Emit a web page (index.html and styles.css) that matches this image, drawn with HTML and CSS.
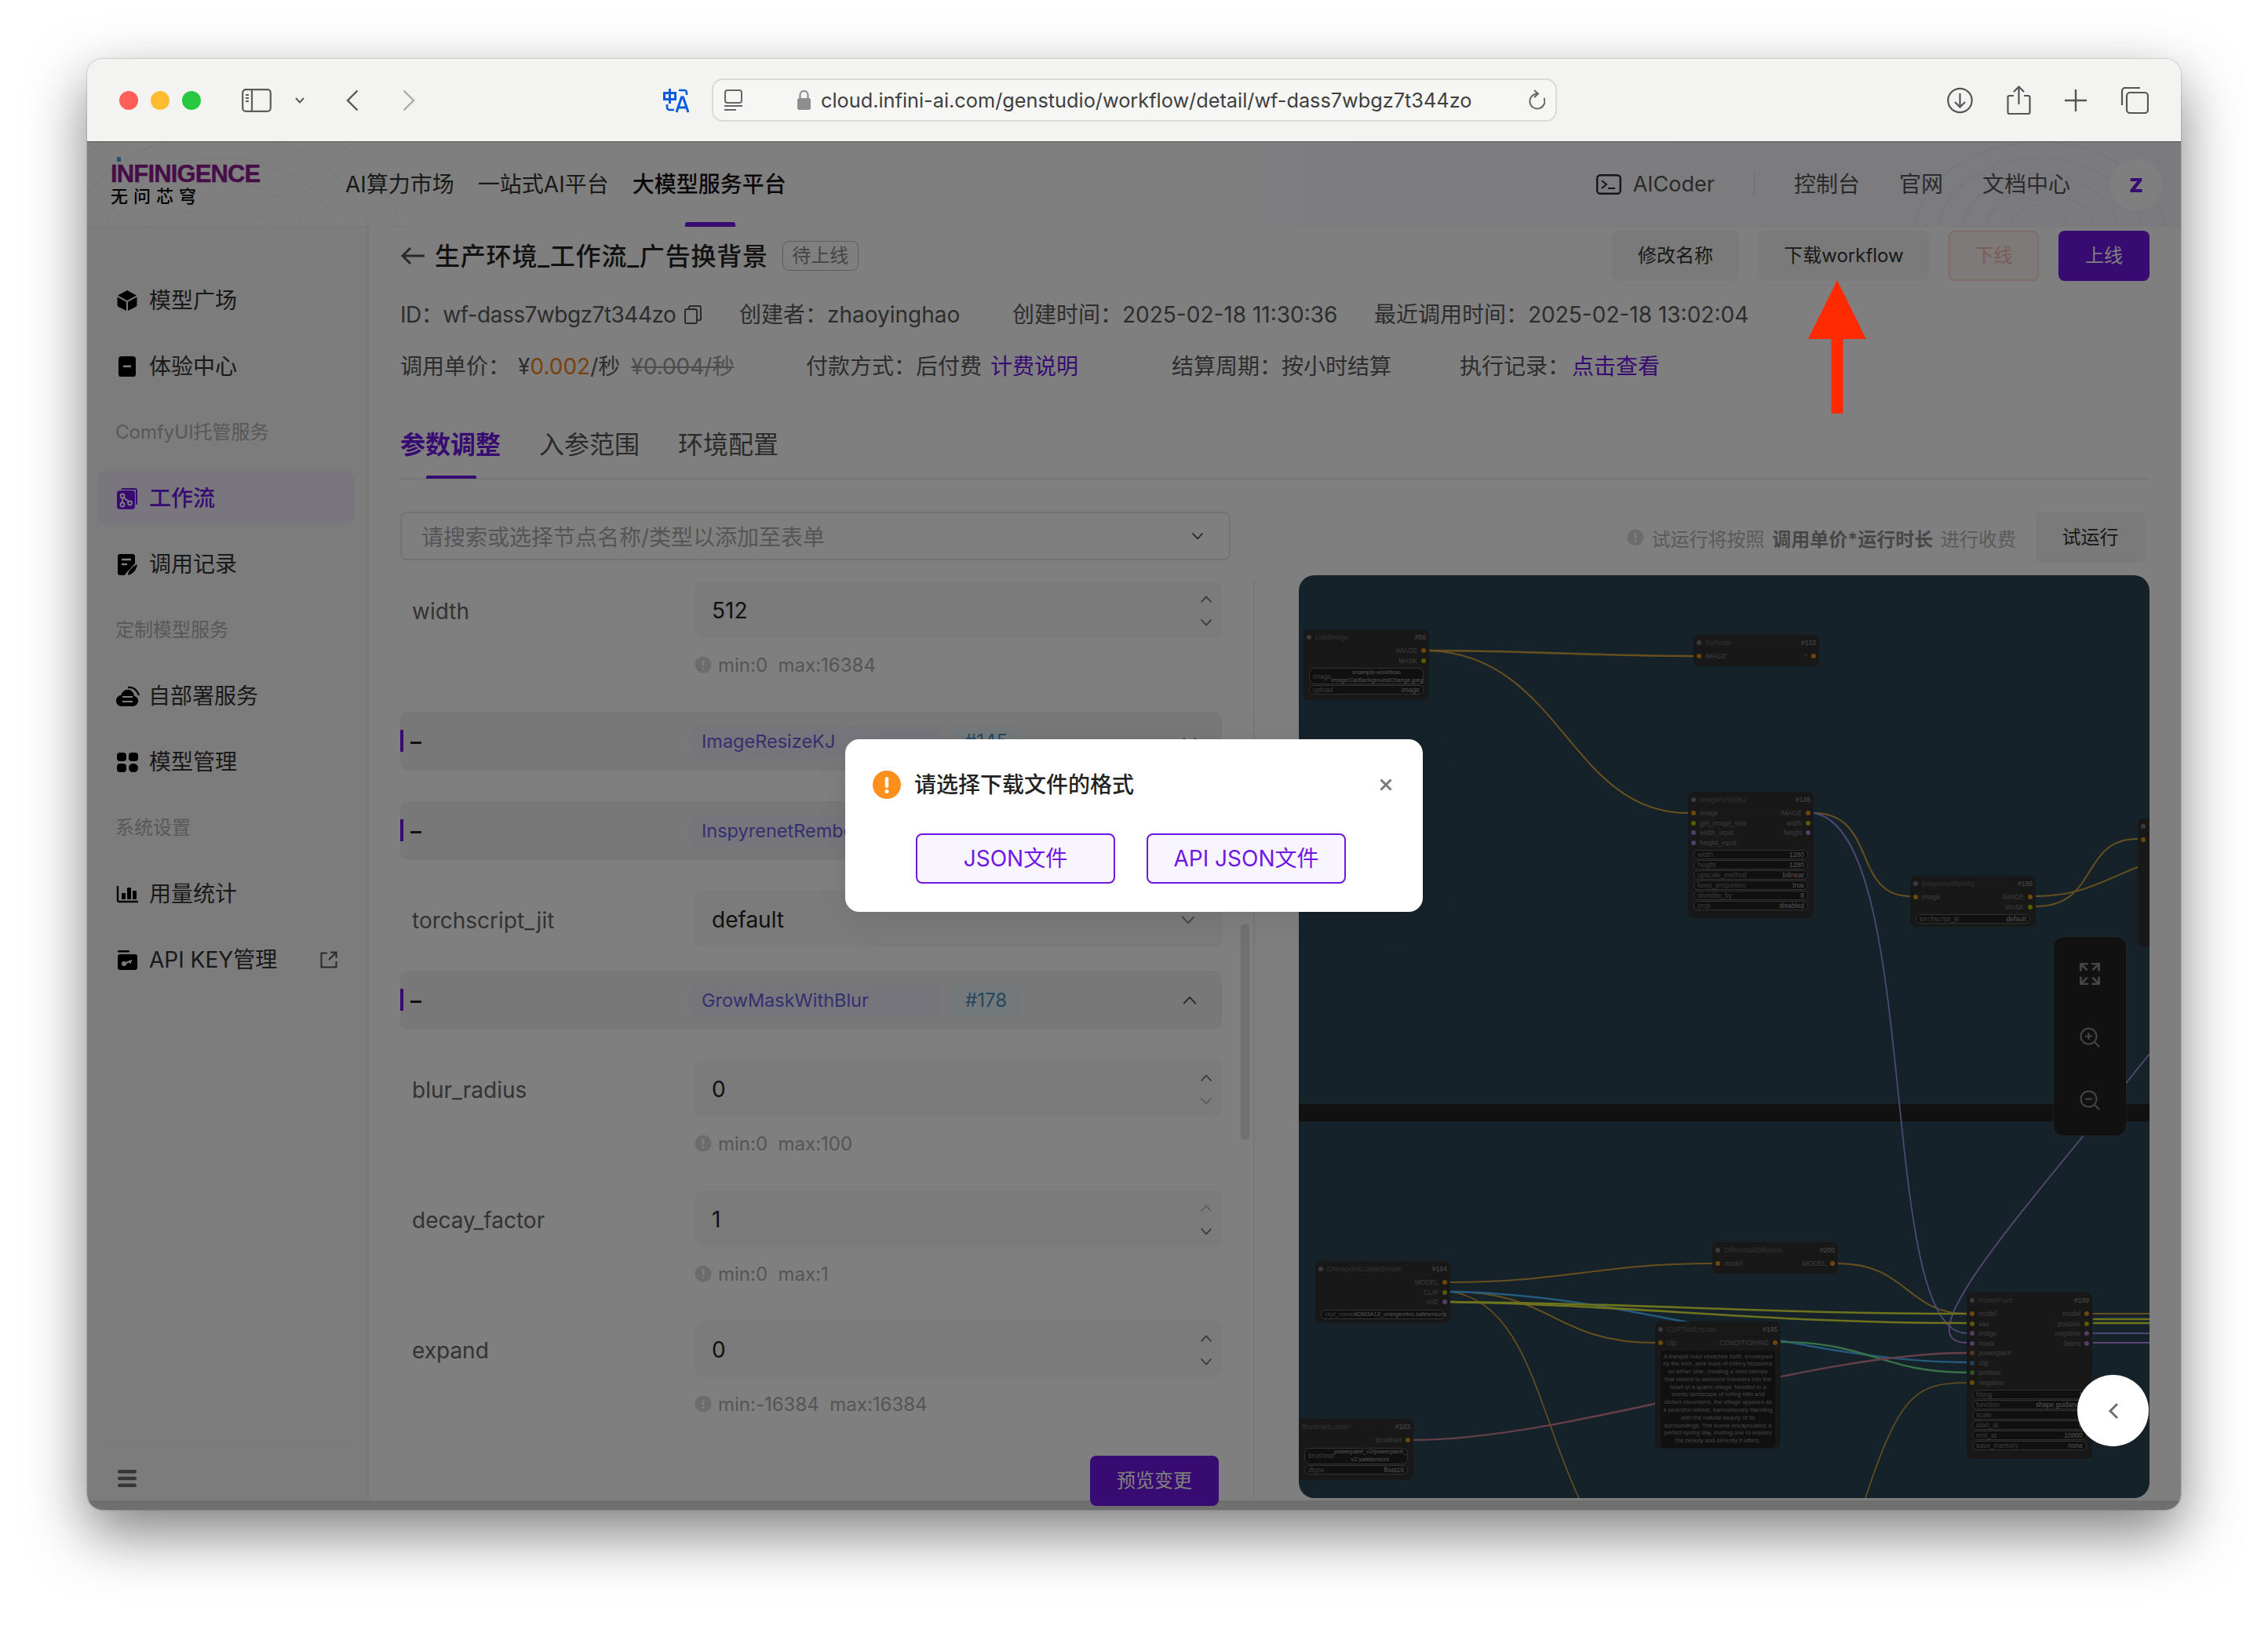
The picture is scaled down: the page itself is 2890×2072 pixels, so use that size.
FILE: index.html
```html
<!DOCTYPE html>
<html lang="zh-CN">
<head>
<meta charset="utf-8">
<title>生产环境_工作流_广告换背景</title>
<link rel="stylesheet" href="styles.css">
</head>
<body>
<svg class="defs" width="0" height="0">
  <symbol id="chev-up" viewBox="0 0 16 10"><path d="M1.5 8.5 8 1.5l6.5 7" fill="none" stroke="currentColor" stroke-width="1.6"/></symbol>
  <symbol id="chev-down" viewBox="0 0 16 10"><path d="M1.5 1.5 8 8.5l6.5-7" fill="none" stroke="currentColor" stroke-width="1.6"/></symbol>
  <symbol id="tip" viewBox="0 0 24 24"><circle cx="12" cy="12" r="11.5" fill="currentColor"/><rect x="10.5" y="5.5" width="3" height="8.5" rx="1.4" fill="#fff"/><circle cx="12" cy="17.3" r="1.7" fill="#fff"/></symbol>
</svg>
<div class="window">
  <div class="toolbar">
    <div class="lights"><i class="light red"></i><i class="light yellow"></i><i class="light green"></i></div>
    <svg class="tb-sidebar" width="38" height="30" viewBox="0 0 38 30"><rect x="1.2" y="1.2" width="35.6" height="27.6" rx="4" fill="none" stroke="#5c5c5c" stroke-width="2.2"/><path d="M13 1v28" stroke="#5c5c5c" stroke-width="2.2"/><path d="M5 8h4M5 12h4M5 16h4" stroke="#5c5c5c" stroke-width="2"/></svg>
    <svg class="tb-menu" width="12" height="8" viewBox="0 0 12 8"><path d="M1 1l5 5.5L11 1" fill="none" stroke="#5c5c5c" stroke-width="2"/></svg>
    <svg class="tb-back" width="16" height="28" viewBox="0 0 16 28"><path d="M14.5 1.5 2 14l12.5 12.5" fill="none" stroke="#555" stroke-width="2.4"/></svg>
    <svg class="tb-fwd" width="16" height="28" viewBox="0 0 16 28"><path d="M1.5 1.5 14 14 1.5 26.5" fill="none" stroke="#aaa" stroke-width="2.4"/></svg>
    <svg class="tb-trans" width="33" height="32" viewBox="0 0 33 32"><path d="M1.5 6.5h14v8h-14zM8.5 1v19" fill="none" stroke="#0a5cdf" stroke-width="3"/><path d="M20 3h7a3 3 0 0 1 3 3v3M5 21v4a3 3 0 0 0 3 3h6" fill="none" stroke="#0a5cdf" stroke-width="2.6"/><path d="M17 31 23.5 12h2L32 31M19.5 25h10" fill="none" stroke="#0a5cdf" stroke-width="3"/></svg>
    <div class="urlbar">
      <svg class="url-reader" width="23" height="27" viewBox="0 0 23 27"><rect x="1" y="1" width="21" height="16" rx="3" fill="none" stroke="#666" stroke-width="2"/><path d="M0 21h23M0 26h15" stroke="#666" stroke-width="2"/></svg>
      <svg class="url-lock" width="17" height="25" viewBox="0 0 17 25"><rect x="0" y="10" width="17" height="15" rx="2.5" fill="#8e8e8e"/><path d="M3.5 11V6a5 5 0 0 1 10 0v5" fill="none" stroke="#8e8e8e" stroke-width="2.2"/></svg>
      <span class="url-text">cloud.infini-ai.com/genstudio/workflow/detail/wf-dass7wbgz7t344zo</span>
      <svg class="url-reload" width="22" height="28" viewBox="0 0 22 28"><path d="M12 5.5a9.5 9.5 0 1 0 8.5 5.5" fill="none" stroke="#666" stroke-width="2"/><path d="M8 1l5 4.5-5 4.5" fill="none" stroke="#666" stroke-width="2"/></svg>
    </div>
    <svg class="tb-dl" width="33" height="34" viewBox="0 0 33 34"><circle cx="16.5" cy="17" r="15.2" fill="none" stroke="#555" stroke-width="2.2"/><path d="M16.5 8v17M10 19l6.5 6.5L23 19" fill="none" stroke="#555" stroke-width="2.2"/></svg>
    <svg class="tb-share" width="31" height="38" viewBox="0 0 31 38"><path d="M9 13H3.500a2 2 0 0 0-2 2v19a2 2 0 0 0 2 2h24a2 2 0 0 0 2-2V15a2 2 0 0 0-2-2H22" fill="none" stroke="#555" stroke-width="2.2"/><path d="M15.500 24V2M9 8l6.500-6.500L22 8" fill="none" stroke="#555" stroke-width="2.2"/></svg>
    <svg class="tb-plus" width="28" height="28" viewBox="0 0 28 28"><path d="M14 0v28M0 14h28" stroke="#555" stroke-width="2.4"/></svg>
    <svg class="tb-tabs" width="36" height="34" viewBox="0 0 36 34"><rect x="8" y="7" width="27" height="26" rx="4" fill="none" stroke="#555" stroke-width="2.2"/><path d="M2 23V5a4 4 0 0 1 4-4h19" fill="none" stroke="#555" stroke-width="2.2"/></svg>
  </div>

  <div class="stage">
    <div class="app">
      <header class="topbar">
        <svg class="ripple ripple-left" width="420" height="108" viewBox="0 0 420 108"><g fill="none" stroke="#000" stroke-opacity=".035" stroke-width="2"><ellipse cx="170" cy="130" rx="70" ry="50"/><ellipse cx="170" cy="130" rx="110" ry="80"/><ellipse cx="170" cy="130" rx="150" ry="110"/><ellipse cx="170" cy="130" rx="190" ry="140"/><ellipse cx="170" cy="130" rx="230" ry="170"/></g></svg>
        <svg class="ripple ripple-right" width="340" height="108" viewBox="0 0 340 108"><g fill="none" stroke="#000" stroke-opacity=".03" stroke-width="2"><ellipse cx="160" cy="120" rx="40" ry="40"/><ellipse cx="160" cy="120" rx="70" ry="60"/><ellipse cx="160" cy="120" rx="100" ry="80"/><ellipse cx="160" cy="120" rx="130" ry="100"/><ellipse cx="160" cy="120" rx="160" ry="120"/></g></svg>
        <div class="logo">
          <div class="logo-en"><span class="logo-one">I</span>NFINIGENCE</div>
          <div class="logo-zh">无问芯穹</div>
        </div>
        <nav class="topnav">
          <a class="topnav-item">AI算力市场</a>
          <a class="topnav-item">一站式AI平台</a>
          <a class="topnav-item active">大模型服务平台</a>
        </nav>
        <div class="top-right">
          <svg class="ai-icon" width="32" height="26" viewBox="0 0 32 26"><rect x="1.200" y="1.200" width="29.600" height="23.600" rx="4" fill="none" stroke="#2d2d2d" stroke-width="2.400"/><path d="M7 8l6 5-6 5M15 18h9" fill="none" stroke="#2d2d2d" stroke-width="2"/></svg>
          <span class="ai-text">AICoder</span>
          <i class="top-sep"></i>
          <a class="top-link">控制台</a>
          <a class="top-link">官网</a>
          <a class="top-link">文档中心</a>
          <div class="avatar">z</div>
        </div>
      </header>

      <div class="body">
        <aside class="sidebar">
          <div class="side-list">
            <a class="side-item"><svg width="28" height="28" viewBox="0 0 28 28"><path d="M14 1 26 7.500 14 14 2 7.500z"/><path d="M1.500 9.500 13 15.800V27L3 22a3 3 0 0 1-1.500-2.500zM26.500 9.500 15 15.800V27l10-5a3 3 0 0 0 1.500-2.500z"/></svg><span>模型广场</span></a>
            <a class="side-item"><svg width="28" height="28" viewBox="0 0 28 28"><path d="M7 1h14a4 4 0 0 1 4 4v19a3 3 0 0 1-3 3H6a3 3 0 0 1-3-3V5a4 4 0 0 1 4-4z"/><rect x="9" y="12.500" width="10" height="2.600" fill="#fff"/></svg><span>体验中心</span></a>
            <div class="side-label">ComfyUI托管服务</div>
            <a class="side-item active"><svg width="28" height="28" viewBox="0 0 28 28"><path d="M7 1h17a3 3 0 0 1 3 3v18h-2V3H7z"/><rect x="1" y="4" width="23" height="24" rx="4"/><g fill="none" stroke="#fff" stroke-width="1.800"><circle cx="8" cy="11" r="2.500"/><circle cx="8" cy="22" r="2.500"/><circle cx="17.500" cy="20" r="2.500"/><path d="M8 13.500v6M9.500 13l6 5"/></g></svg><span>工作流</span></a>
            <a class="side-item"><svg width="28" height="28" viewBox="0 0 28 28"><path d="M5 1h16a3 3 0 0 1 3 3v9L12 26l-1 2H5a3 3 0 0 1-3-3V4a3 3 0 0 1 3-3z"/><path d="M7 8h12M7 14h7" stroke="#fff" stroke-width="2.400"/><path d="M15 28c0-6 6-11 12-14-1 7-5 12-12 14z"/></svg><span>调用记录</span></a>
            <div class="side-label">定制模型服务</div>
            <a class="side-item wide"><svg width="32" height="28" viewBox="0 0 32 28"><path d="M17 3c6-1 12 3 14 10" fill="none" stroke="#111" stroke-width="2.400"/><path d="M2 20c0-4 3-7 6-7 2-5 6-8 10-7 4 .5 7 4 7 8 3 .5 5 3 5 6 0 4-3 7-7 7H9c-4 0-7-3-7-7z"/><path d="M10 15h13M10 21h13" stroke="#fff" stroke-width="2"/></svg><span>自部署服务</span></a>
            <a class="side-item"><svg width="28" height="28" viewBox="0 0 28 28"><rect x="1" y="2" width="12" height="11" rx="4"/><rect x="16" y="2" width="12" height="11" rx="4"/><rect x="1" y="16" width="12" height="11" rx="4"/><rect x="16" y="16" width="12" height="11" rx="5.500"/></svg><span>模型管理</span></a>
            <div class="side-label">系统设置</div>
            <a class="side-item"><svg width="28" height="28" viewBox="0 0 28 28"><path d="M2 4v18a2 2 0 0 0 2 2h24" fill="none" stroke="#111" stroke-width="2.400"/><rect x="7" y="13" width="5" height="8" rx="1"/><rect x="14" y="6" width="5" height="15" rx="1"/><rect x="21" y="10" width="5" height="11" rx="1"/></svg><span>用量统计</span></a>
            <a class="side-item"><svg width="28" height="28" viewBox="0 0 28 28"><rect x="2" y="2" width="15" height="2.500" rx="1"/><path d="M5 7h19a3 3 0 0 1 3 3v14a3 3 0 0 1-3 3H5a3 3 0 0 1-3-3V10a3 3 0 0 1 3-3z"/><circle cx="10" cy="19" r="3" fill="#fff"/><path d="M10 19l10-4M18 15.800v3" stroke="#fff" stroke-width="2"/></svg><span>API KEY管理</span><svg class="side-ext" width="22" height="22" viewBox="0 0 22 22"><path d="M9 2.500H1.500v18h19V13M13 1.500h7.500V9M20 2l-9 9" fill="none" stroke="#545454" stroke-width="2"/></svg></a>
          </div>
          <div class="side-foot"><svg width="24" height="22" viewBox="0 0 24 22"><rect y="0" width="24" height="4.500" rx="2.200"/><rect y="8.800" width="24" height="4.500" rx="2.200"/><rect y="17.500" width="24" height="4.500" rx="2.200"/></svg></div>
        </aside>

        <main class="main">
          <div class="title-row">
            <svg class="back" width="32" height="24" viewBox="0 0 32 24"><path d="M31 12H3M13 2 3 12l10 10" fill="none" stroke="#555" stroke-width="3"/></svg>
            <h1 class="title">生产环境_工作流_广告换背景</h1>
            <span class="status">待上线</span>
            <div class="title-actions">
              <button class="btn">修改名称</button>
              <button class="btn w-dl">下载workflow</button>
              <button class="btn danger">下线</button>
              <button class="btn primary">上线</button>
            </div>
          </div>

          <div class="info">
            <div class="info-row">
              <span class="c-id"><span class="id-text">ID：wf-dass7wbgz7t344zo</span><svg class="copy" width="22" height="24" viewBox="0 0 22 24"><rect x="1" y="5" width="15" height="18" rx="2" fill="none" stroke="#555" stroke-width="2"/><path d="M6 5V3a2 2 0 0 1 2-2h11a2 2 0 0 1 2 2v14a2 2 0 0 1-2 2h-3" fill="none" stroke="#555" stroke-width="2"/></svg></span>
              <span class="c-user">创建者：zhaoyinghao</span>
              <span class="c-time">创建时间：2025-02-18 11:30:36</span>
              <span>最近调用时间：2025-02-18 13:02:04</span>
            </div>
            <div class="info-row">
              <span class="c-price">调用单价：<span class="price">¥<b>0.002</b>/秒</span><s class="old">¥0.004/秒</s></span>
              <span class="c-pay">付款方式：后付费<a class="link">计费说明</a></span>
              <span class="c-cycle">结算周期：按小时结算</span>
              <span>执行记录：<a class="link tight">点击查看</a></span>
            </div>
          </div>

          <div class="tabs">
            <a class="tab active">参数调整</a>
            <a class="tab">入参范围</a>
            <a class="tab">环境配置</a>
          </div>

          <div class="split">
            <section class="left">
              <div class="select"><span>请搜索或选择节点名称/类型以添加至表单</span><svg width="16" height="10"><use href="#chev-down"/></svg></div>
              <div class="form">
                <div class="field">
                  <label>width</label>
                  <div class="input"><span>512</span><div class="spin"><svg width="16" height="10"><use href="#chev-up"/></svg><svg width="16" height="10"><use href="#chev-down"/></svg></div></div>
                  <div class="hint"><svg width="22" height="22"><use href="#tip"/></svg>min:0&nbsp; max:16384</div>
                </div>
                <div class="group"><i class="g-bar"></i><b class="g-dash"></b><span class="g-name">ImageResizeKJ</span><span class="g-id">#145</span><svg class="g-chev" width="20" height="12"><use href="#chev-down"/></svg></div>
                <div class="group"><i class="g-bar"></i><b class="g-dash"></b><span class="g-name">InspyrenetRembg</span><span class="g-id">#186</span><svg class="g-chev" width="20" height="12"><use href="#chev-down"/></svg></div>
                <div class="field nohint">
                  <label>torchscript_jit</label>
                  <div class="input"><span>default</span><svg class="sel-chev" width="20" height="12"><use href="#chev-down"/></svg></div>
                </div>
                <div class="group"><i class="g-bar"></i><b class="g-dash"></b><span class="g-name">GrowMaskWithBlur</span><span class="g-id">#178</span><svg class="g-chev" width="20" height="12"><use href="#chev-up"/></svg></div>
                <div class="field">
                  <label>blur_radius</label>
                  <div class="input"><span>0</span><div class="spin"><svg width="16" height="10"><use href="#chev-up"/></svg><svg class="faint" width="16" height="10"><use href="#chev-down"/></svg></div></div>
                  <div class="hint"><svg width="22" height="22"><use href="#tip"/></svg>min:0&nbsp; max:100</div>
                </div>
                <div class="field">
                  <label>decay_factor</label>
                  <div class="input"><span>1</span><div class="spin"><svg class="faint" width="16" height="10"><use href="#chev-up"/></svg><svg width="16" height="10"><use href="#chev-down"/></svg></div></div>
                  <div class="hint"><svg width="22" height="22"><use href="#tip"/></svg>min:0&nbsp; max:1</div>
                </div>
                <div class="field last">
                  <label>expand</label>
                  <div class="input"><span>0</span><div class="spin"><svg width="16" height="10"><use href="#chev-up"/></svg><svg width="16" height="10"><use href="#chev-down"/></svg></div></div>
                  <div class="hint"><svg width="22" height="22"><use href="#tip"/></svg>min:-16384&nbsp; max:16384</div>
                </div>
                <button class="btn preview">预览变更</button>
                <i class="scrollbar"></i>
              </div>
            </section>

            <section class="right">
              <div class="run-row">
                <svg width="22" height="22"><use href="#tip"/></svg>
                <span class="run-note">试运行将按照 <b>调用单价*运行时长</b> 进行收费</span>
                <button class="btn run">试运行</button>
              </div>
              <div class="canvas">
                <i class="band"></i>
                <svg class="wires" viewBox="1655 734 1084 1176" width="1084" height="1176">
                  <g fill="none" stroke-width="2">
                    <g stroke="#cfa03c">
                      <path d="M1821 830C1950 830 2030 837 2158 837" stroke-width="2.600"/>
                      <path d="M1821 830C1990 836 2000 1037 2151 1037"/>
                      <path d="M2311 1037C2392 1037 2360 1143 2434 1143"/>
                      <path d="M2594 1156C2675 1156 2650 1070 2724 1070"/>
                      <path d="M2594 1143C2655 1143 2680 1122 2739 1100"/>
                      <path d="M1848 1635C1990 1635 2040 1611 2182 1611"/>
                      <path d="M1848 1647C1980 1647 1980 1712 2109 1712"/>
                      <path d="M2342 1611C2430 1611 2430 1675 2506 1675"/>
                      <path d="M2667 1675H2739"/>
                      <path d="M1848 1647C1945 1660 1960 1800 2012 1910" stroke-width="1.600"/>
                      <path d="M2377 1910C2420 1780 2440 1763 2506 1763" stroke-width="1.600"/>
                    </g>
                    <g stroke="#9a90e8">
                      <path d="M2311 1037C2450 1060 2390 1700 2506 1700" stroke-width="1.800"/>
                      <path d="M2667 1700H2739"/>
                    </g>
                    <g stroke="#b090e0">
                      <path d="M2506 1712C2440 1712 2530 1600 2655 1448L2739 1344" stroke-width="1.800"/>
                      <path d="M2667 1712H2739"/>
                    </g>
                    <g stroke="#48b6ff" stroke-width="2.400">
                      <path d="M1848 1647C2080 1650 2300 1737 2506 1737"/>
                    </g>
                    <g stroke="#dce83a" stroke-width="2.600">
                      <path d="M1848 1660C2100 1665 2250 1687 2506 1687"/>
                      <path d="M1848 1660C2100 1662 2250 1675 2506 1675"/>
                      <path d="M2667 1682H2739"/>
                      <path d="M2667 1687H2739"/>
                    </g>
                    <path stroke="#70e090" stroke-width="2.400" d="M2269 1711C2380 1711 2400 1750 2506 1750"/>
                    <path stroke="#c87e90" stroke-width="2.400" d="M1801 1836C2000 1836 2300 1725 2506 1725"/>
                  </g>
                </svg>

                <div class="node n-load">
                  <div class="n-head"><i class="pin none"></i><span>LoadImage</span><b>#56</b></div>
                  <div class="port end"><span>IMAGE</span><i class="pin gold"></i></div>
                  <div class="port end"><span>MASK</span><i class="pin yel"></i></div>
                  <div class="wg tall"><span>image</span><em>example-workflow-<br>image/CarBackgroundChange.jpeg</em></div>
                  <div class="wg"><span>upload</span><em>image</em></div>
                </div>
                <div class="node n-set">
                  <div class="n-head"><i class="pin none"></i><span>SetNode</span><b>#133</b></div>
                  <div class="port"><i class="pin gold"></i><span>IMAGE</span><s></s><span>*</span><i class="pin gold"></i></div>
                </div>
                <div class="node n-resize">
                  <div class="n-head"><i class="pin none"></i><span>ImageResizeKJ</span><b>#145</b></div>
                  <div class="port"><i class="pin gold"></i><span>image</span><s></s><span>IMAGE</span><i class="pin gold"></i></div>
                  <div class="port"><i class="pin yel"></i><span>get_image_size</span><s></s><span>width</span><i class="pin yel"></i></div>
                  <div class="port"><i class="pin pur"></i><span>width_input</span><s></s><span>height</span><i class="pin pur"></i></div>
                  <div class="port"><i class="pin pur"></i><span>height_input</span></div>
                  <div class="wg"><span>width</span><em>1280</em></div>
                  <div class="wg"><span>height</span><em>1280</em></div>
                  <div class="wg"><span>upscale_method</span><em>bilinear</em></div>
                  <div class="wg"><span>keep_proportion</span><em>true</em></div>
                  <div class="wg"><span>divisible_by</span><em>8</em></div>
                  <div class="wg"><span>crop</span><em>disabled</em></div>
                </div>
                <div class="node n-rembg">
                  <div class="n-head"><i class="pin none"></i><span>InspyrenetRembg</span><b>#186</b></div>
                  <div class="port"><i class="pin gold"></i><span>image</span><s></s><span>IMAGE</span><i class="pin gold"></i></div>
                  <div class="port end"><span>MASK</span><i class="pin yel"></i></div>
                  <div class="wg"><span>torchscript_jit</span><em>default</em></div>
                </div>
                <div class="node n-edge">
                  <div class="n-head"><i class="pin none"></i></div>
                  <div class="port"><i class="pin gold"></i></div>
                </div>
                <div class="node n-ckpt">
                  <div class="n-head"><i class="pin none"></i><span>CheckpointLoaderSimple</span><b>#184</b></div>
                  <div class="port end"><span>MODEL</span><i class="pin gold"></i></div>
                  <div class="port end"><span>CLIP</span><i class="pin yel"></i></div>
                  <div class="port end"><span>VAE</span><i class="pin pur"></i></div>
                  <div class="wg"><span>ckpt_name</span><em>ADM3A13_orangemixs.safetensors</em></div>
                </div>
                <div class="node n-diff">
                  <div class="n-head"><i class="pin none"></i><span>DifferentialDiffusion</span><b>#200</b></div>
                  <div class="port"><i class="pin gold"></i><span>model</span><s></s><span>MODEL</span><i class="pin gold"></i></div>
                </div>
                <div class="node n-clip">
                  <div class="n-head"><i class="pin none"></i><span>CLIPTextEncode</span><b>#195</b></div>
                  <div class="port"><i class="pin gold"></i><span>clip</span><s></s><span>CONDITIONING</span><i class="pin gold"></i></div>
                  <p class="prompt">A tranquil road stretches forth, enveloped by the lush, pink hues of cherry blossoms on either side, creating a vivid canopy that seems to welcome travelers into the heart of a quaint village. Nestled in a scenic landscape of rolling hills and distant mountains, the village appears as a peaceful retreat, harmoniously blending with the natural beauty of its surroundings. The scene encapsulates a perfect spring day, inviting one to explore the beauty and serenity it offers.</p>
                </div>
                <div class="node n-brush">
                  <div class="n-head"><span>BrushNetLoader</span><b>#183</b></div>
                  <div class="port end"><span>brushnet</span><i class="pin gold"></i></div>
                  <div class="wg tall"><span>brushnet</span><em>powerpaint_v2/powerpaint_<br>v2.safetensors</em></div>
                  <div class="wg"><span>dtype</span><em>float16</em></div>
                </div>
                <div class="node n-power">
                  <div class="n-head"><i class="pin none"></i><span>PowerPaint</span><b>#189</b></div>
                  <div class="port"><i class="pin gold"></i><span>model</span><s></s><span>model</span><i class="pin gold"></i></div>
                  <div class="port"><i class="pin yel"></i><span>vae</span><s></s><span>positive</span><i class="pin yel"></i></div>
                  <div class="port"><i class="pin pur"></i><span>image</span><s></s><span>negative</span><i class="pin pur"></i></div>
                  <div class="port"><i class="pin pur"></i><span>mask</span><s></s><span>latent</span><i class="pin pur"></i></div>
                  <div class="port"><i class="pin bro"></i><span>powerpaint</span></div>
                  <div class="port"><i class="pin blu"></i><span>clip</span></div>
                  <div class="port"><i class="pin grn"></i><span>positive</span></div>
                  <div class="port"><i class="pin gold"></i><span>negative</span></div>
                  <div class="wg"><span>fitting</span><em>1</em></div>
                  <div class="wg"><span>function</span><em>shape guidance</em></div>
                  <div class="wg"><span>scale</span><em>1</em></div>
                  <div class="wg"><span>start_at</span><em>0</em></div>
                  <div class="wg"><span>end_at</span><em>10000</em></div>
                  <div class="wg"><span>save_memory</span><em>none</em></div>
                </div>

                <div class="zoom-panel">
                  <svg width="26" height="28" viewBox="0 0 22 24"><path d="M1 9V1h8M1 1l7 7M21 9V1h-8M21 1l-7 7M1 15v8h8M1 23l7-7M21 15v8h-8M21 23l-7-7" fill="none" stroke="#8a8a8a" stroke-width="2.400"/></svg>
                  <svg width="26" height="26" viewBox="0 0 26 26"><circle cx="11.500" cy="11.500" r="10" fill="none" stroke="#8a8a8a" stroke-width="2"/><path d="M7 11.500h9M11.500 7v9M19 19l6 6" fill="none" stroke="#8a8a8a" stroke-width="2"/></svg>
                  <svg width="26" height="26" viewBox="0 0 26 26"><circle cx="11.500" cy="11.500" r="10" fill="none" stroke="#8a8a8a" stroke-width="2"/><path d="M7 11.500h9M19 19l6 6" fill="none" stroke="#8a8a8a" stroke-width="2"/></svg>
                </div>
              </div>
            </section>
          </div>
        </main>
      </div>
    </div>

    <div class="mask"></div>

    <div class="fold"><svg width="14" height="22" viewBox="0 0 14 22"><path d="M12 2 3 11l9 9" fill="none" stroke="#6f6f6f" stroke-width="3"/></svg></div>

    <svg class="red-arrow" width="74" height="170" viewBox="0 0 74 170"><path d="M37 0 74 75H44.500V170H29.500V75H0z" fill="#ff2a00"/></svg>

    <div class="modal">
      <div class="modal-head">
        <svg width="36" height="36" viewBox="0 0 36 36"><circle cx="18" cy="18" r="18" fill="#fe8f1c"/><rect x="15.800" y="8" width="4.400" height="14" rx="2" fill="#fff"/><circle cx="18" cy="26.500" r="2.500" fill="#fff"/></svg>
        <span class="modal-title">请选择下载文件的格式</span>
        <svg class="modal-close" width="16" height="16" viewBox="0 0 16 16"><path d="M1.500 1.500l13 13M14.500 1.500l-13 13" stroke="#7a7a7a" stroke-width="3"/></svg>
      </div>
      <div class="modal-actions">
        <button class="opt">JSON文件</button>
        <button class="opt">API JSON文件</button>
      </div>
    </div>
  </div>
</div>
</body>
</html>
```

FILE: styles.css
```css
* { box-sizing: border-box; }
html, body { margin: 0; padding: 0; background: #fff; }
body {
  width: 2890px;
  height: 2072px;
  padding: 75px 0 0 111px;
  overflow: hidden;
  font-family: "Inter", "Noto Sans CJK SC", sans-serif;
  font-size: 28px;
  color: #1f1f1f;
}
.defs { position: absolute; }
button { font: inherit; cursor: pointer; }
a { color: inherit; text-decoration: none; }
svg { display: block; flex: none; }

/* browser window */
.window {
  width: 2668px;
  height: 1849px;
  border-radius: 20px;
  overflow: hidden;
  display: flex;
  flex-direction: column;
  background: #f3f3f2;
  box-shadow: 0 30px 75px rgba(0, 0, 0, .5), 0 0 2px rgba(0, 0, 0, .4);
}
.toolbar {
  height: 105px;
  flex: none;
  display: flex;
  align-items: center;
  padding-left: 41px;
  background: #f3f3f2;
}
.lights { display: flex; gap: 16px; }
.light { width: 24px; height: 24px; border-radius: 50%; }
.red { background: #ff5f57; }
.yellow { background: #febc2e; }
.green { background: #28c840; }
.tb-sidebar { margin-left: 52px; }
.tb-menu { margin-left: 30px; }
.tb-back { margin-left: 53px; }
.tb-fwd { margin-left: 56px; }
.tb-trans { margin-left: 316px; }
.urlbar {
  margin-left: 29px;
  width: 1077px;
  height: 55px;
  border: 2px solid #dadad9;
  border-radius: 14px;
  background: #f6f6f5;
  display: flex;
  align-items: center;
  padding-left: 14px;
}
.url-lock { margin-left: 70px; }
.url-text {
  margin-left: 13px;
  width: 880px;
  font-family: "Inter", sans-serif;
  font-size: 25.3px;
  line-height: 34px;
  color: #3f3f3f;
  white-space: nowrap;
}
.url-reload { margin-left: 21px; }
.tb-dl { margin-left: 497px; }
.tb-share { margin-left: 43px; }
.tb-plus { margin-left: 43px; }
.tb-tabs { margin-left: 43px; }

/* stage + mask */
.stage {
  position: relative;
  flex: 1;
  background: #dfdfe1;
  border-top: 1px solid #555;
}
.mask {
  position: absolute;
  inset: 0;
  background: rgba(0, 0, 0, .5);
}
.app {
  height: 1731px;
  display: flex;
  flex-direction: column;
  background: #fff;
}
.topbar {
  position: relative;
  height: 108px;
  flex: none;
  display: flex;
  align-items: center;
  padding: 0 24px 0 30px;
  background: linear-gradient(90deg, #fff 0%, #fff 35%, #f6f4fd 100%);
  border-bottom: 1px solid #f2f2f2;
}
.ripple { position: absolute; top: 0; }
.ripple-left { left: 0; }
.ripple-right { right: 0; }
.logo { position: relative; width: 194px; padding-top: 3px; }
.logo-en {
  font-family: "Liberation Sans", sans-serif;
  font-weight: 700;
  font-size: 31px;
  line-height: 26px;
  letter-spacing: -.85px;
  color: #8e1a90;
  white-space: nowrap;
  -webkit-text-stroke: .4px #8e1a90;
}
.logo-one { position: relative; }
.logo-one::before {
  content: "";
  position: absolute;
  left: 8px;
  top: -4px;
  width: 5px;
  height: 6px;
  background: #3fa0f0;
}
.logo-zh {
  margin-top: 2px;
  font-size: 22px;
  line-height: 26px;
  letter-spacing: 7px;
  font-weight: 500;
  color: #000;
}
.topnav { display: flex; gap: 30px; margin-left: 105px; position: relative; }
.topnav-item {
  position: relative;
  font-size: 28px;
  line-height: 40px;
  color: #333;
  white-space: nowrap;
}
.topnav-item.active { color: #111; font-weight: 500; }
.topnav-item.active::after {
  content: "";
  position: absolute;
  left: 67px;
  bottom: -34px;
  width: 64px;
  height: 6px;
  border-radius: 3px 3px 0 0;
  background: #6f17e3;
}
.top-right { margin-left: auto; display: flex; align-items: center; position: relative; color: #555; }
.ai-text { margin-left: 15px; font-size: 27px; line-height: 40px; }
.top-sep { width: 1px; height: 30px; margin: 0 50px; background: #ddd; }
.top-link { font-size: 28px; line-height: 40px; margin-right: 50px; white-space: nowrap; }
.top-link:nth-of-type(3) { margin-right: 51px; }
.avatar {
  width: 66px;
  height: 66px;
  border-radius: 50%;
  background: #fff;
  color: #6f17e3;
  font-weight: 700;
  font-size: 33px;
  line-height: 62px;
  text-align: center;
}

.body { flex: 1; display: flex; min-height: 0; }

/* sidebar */
.sidebar {
  width: 359px;
  flex: none;
  display: flex;
  flex-direction: column;
  background: #f8f8f8;
  border-right: 2px solid #ececec;
}
.side-list {
  flex: 1;
  display: flex;
  flex-direction: column;
  gap: 16px;
  padding: 59px 16px 0 14px;
}
.side-item, .side-label {
  height: 68px;
  display: flex;
  align-items: center;
  border-radius: 10px;
  white-space: nowrap;
}
.side-item { padding: 1px 0 0 23px; gap: 14px; color: #333; font-size: 28px; line-height: 40px; }
.side-item svg { fill: #000; }
.side-item.wide { gap: 11px; padding-left: 21px; }
.side-item.active { background: #f3eefa; color: #6f17e3; font-weight: 500; }
.side-item.active > svg { fill: #6f17e3; }
.side-label { padding: 0 0 4px 22px; font-size: 24px; color: #b0b0b0; }
.side-ext { margin-left: auto; margin-right: 22px; }
.side-foot {
  height: 69px;
  margin: 0 16px 0 15px;
  border-top: 1px solid #ededed;
  padding: 29px 0 0 24px;
  flex: none;
}
.side-foot svg { fill: #6c6c6c; }

/* main */
.main { flex: 1; min-width: 0; padding: 5px 40px 0 40px; display: flex; flex-direction: column; }
.title-row { height: 64px; display: flex; align-items: center; flex: none; }
.title { margin: 2px 0 0 12px; font-size: 32px; line-height: 44px; font-weight: 500; letter-spacing: .8px; color: #222; white-space: nowrap; }
.status {
  margin-left: 18px;
  height: 38px;
  width: 97px;
  border: 1px solid #bbb;
  border-radius: 8px;
  text-align: center;
  font-size: 24px;
  line-height: 36px;
  color: #8a8a8a;
}
.title-actions { margin-left: auto; display: flex; gap: 25px; }
.btn {
  height: 64px;
  width: 162px;
  padding: 0;
  border: 0;
  border-radius: 8px;
  background: #f5f5f5;
  color: #333;
  font-size: 24px;
  line-height: 32px;
  white-space: nowrap;
}
.w-dl { width: 217px; }
.btn.danger {
  width: 115px;
  background: #fbf4f2;
  border: 2px solid #fbdcd5;
  color: #f7b7ae;
}
.btn.primary, .btn.preview { width: 116px; background: #6f17e3; color: #fff; }

.info { margin-top: 25px; display: flex; flex-direction: column; gap: 30px; color: #5a5a5a; flex: none; }
.info-row { display: flex; height: 36px; align-items: center; line-height: 36px; font-size: 28px; white-space: nowrap; }
.c-id { width: 432px; display: flex; align-items: center; }
.id-text { letter-spacing: -.5px; }
.copy { margin-left: 11px; }
.c-user { width: 348px; }
.c-time { width: 461px; }
.c-price { width: 517px; display: flex; }
.price { margin-left: 10px; color: #5a5a5a; }
.price b { font-weight: 400; color: #f58220; }
.old { margin-left: 14px; color: #9a9a9a; }
.c-pay { width: 466px; }
.c-cycle { width: 367px; }
.link { color: #6f17e3; margin-left: 11px; }
.link.tight { margin-left: 3px; }

.tabs {
  margin-top: 38px;
  flex: none;
  height: 88px;
  padding-top: 22px;
  display: flex;
  border-bottom: 2px solid #eee;
}
.tab { position: relative; font-size: 32px; line-height: 44px; color: #555; margin-right: 49px; }
.tab.active { color: #6f17e3; font-weight: 600; }
.tab.active::after {
  content: "";
  position: absolute;
  left: 33px;
  bottom: -1px;
  width: 64px;
  height: 4px;
  border-radius: 2px 2px 0 0;
  background: #6f17e3;
}

.split { flex: 1; min-height: 0; display: flex; }
.left { width: 1089px; flex: none; padding-top: 41px; }
.select {
  width: 1058px;
  height: 62px;
  border: 2px solid #e6e6e6;
  border-radius: 8px;
  display: flex;
  align-items: center;
  justify-content: space-between;
  padding: 0 32px 0 25px;
  font-size: 28px;
  color: #aaa;
}
.select svg { color: #444; }

.form {
  position: relative;
  margin-top: 25px;
  height: 1170px;
  padding-top: 2px;
  border-right: 2px solid #efefef;
}
.field {
  width: 1047px;
  display: grid;
  grid-template-columns: 375px 672px;
  margin-bottom: 44px;
}
.field.nohint { margin-bottom: 28px; }
.field.last { margin-bottom: 50px; }
.field label {
  padding: 2px 0 0 15px;
  font-size: 28px;
  line-height: 72px;
  color: #666;
}
.input {
  height: 72px;
  padding: 2px 12px 0 22px;
  border-radius: 10px;
  background: #f6f6f6;
  display: flex;
  align-items: center;
  justify-content: space-between;
  font-size: 28px;
  color: #222;
}
.spin { display: flex; flex-direction: column; gap: 19px; color: #666; }
.spin .faint { opacity: .45; }
.sel-chev { margin-right: 21px; color: #888; }
.hint {
  grid-column: 2;
  height: 32px;
  margin-top: 16px;
  display: flex;
  align-items: center;
  gap: 8px;
  font-size: 24px;
  color: #aaa;
}
.hint svg, .run-row > svg { color: #d8d8d8; }

.group {
  position: relative;
  width: 1047px;
  height: 75px;
  margin-bottom: 39px;
  border-radius: 10px;
  background: #f0f0f0;
  display: flex;
  align-items: center;
}
.g-bar { position: absolute; left: 0; top: 23px; width: 4px; height: 28px; background: #6f17e3; }
.g-dash { position: absolute; left: 13px; top: 38px; width: 14px; height: 3px; background: #222; }
.g-name {
  margin-left: 369px;
  width: 320px;
  height: 40px;
  padding-left: 15px;
  line-height: 40px;
  font-size: 23.5px;
  border-radius: 8px;
  background: #ecebf7;
  color: #6a5fe0;
  white-space: nowrap;
}
.g-id {
  margin-left: 12px;
  width: 91px;
  height: 40px;
  line-height: 40px;
  text-align: center;
  font-size: 24px;
  border-radius: 8px;
  background: #e6f1f4;
  color: #4d8fbb;
}
.g-chev { margin-left: auto; margin-right: 31px; color: #555; }

.btn.preview { display: block; margin-left: 879px; width: 164px; height: 64px; font-size: 24px; }
.scrollbar {
  position: absolute;
  left: 1071px;
  top: 438px;
  width: 11px;
  height: 276px;
  border-radius: 6px;
  background: #e2e2e2;
}

.right { flex: 1; min-width: 0; margin-left: 56px; padding-top: 42px; }
.run-row {
  height: 64px;
  display: flex;
  align-items: center;
  justify-content: flex-end;
  padding-right: 6px;
}
.run-note { margin-left: 10px; font-size: 24px; color: #b5b5b5; white-space: pre; word-spacing: 3px; }
.run-note b { font-weight: 600; color: #8f8f8f; }
.btn.run { margin-left: 25px; width: 139px; background: #f5f5f5; color: #333; font-size: 24px; }

/* workflow canvas */
.canvas {
  position: relative;
  margin-top: 16px;
  width: 1084px;
  height: 1176px;
  border-radius: 20px;
  background: #2c4454;
  overflow: hidden;
}
.band { position: absolute; left: 0; right: 0; top: 674px; height: 22px; background: #222; }
.wires { position: absolute; left: 0; top: 0; }
.node {
  position: absolute;
  width: 160px;
  padding: 0 4px;
  background: #303030;
  border-radius: 7px;
  font-family: "Liberation Sans", sans-serif;
  font-size: 8.5px;
  color: #7c7c7c;
}
.n-head {
  height: 20px;
  margin-bottom: 1px;
  display: flex;
  align-items: center;
  gap: 5px;
  color: #666;
  border-bottom: 1px solid #2a2a2a;
}
.n-head b { margin-left: auto; font-weight: 400; color: #999; }
.port { height: 12.5px; display: flex; align-items: center; gap: 5px; line-height: 12.5px; white-space: nowrap; }
.port s { flex: 1; }
.port.end { justify-content: flex-end; }
.pin { width: 6px; height: 6px; border-radius: 50%; flex: none; }
.pin.none { background: #777; }
.gold { background: #d88e10; }
.yel { background: #b5b500; }
.pur { background: #a47fcc; }
.bro { background: #b2614f; }
.blu { background: #3d84b8; }
.grn { background: #62a84e; }
.wg {
  height: 12px;
  margin: 1px 3px;
  padding: 0 4px;
  border: 1px solid #626262;
  border-radius: 7px;
  background: #202020;
  display: flex;
  align-items: center;
  justify-content: space-between;
  line-height: 10px;
  white-space: nowrap;
}
.wg em { font-style: normal; color: #aaa; }
.wg.tall { height: 21px; }
.wg.tall em { flex: 1; text-align: center; font-size: 7.5px; }
.n-ckpt .wg { font-size: 7.5px; }
.port + .wg { margin-top: 3px; }
.prompt {
  margin: 3px 3px 0;
  padding: 3px 3px;
  height: 124px;
  border-radius: 5px;
  background: #202020;
  font-size: 7.6px;
  line-height: 9.8px;
  text-align: center;
  color: #8c8c8c;
}
.n-load { left: 6px; top: 69px; height: 90px; }
.n-set { left: 503px; top: 76px; height: 40px; }
.n-resize { left: 496px; top: 276px; height: 161px; }
.n-rembg { left: 779px; top: 383px; height: 65px; }
.n-edge { left: 1069px; top: 310px; height: 164px; }
.n-ckpt { left: 21px; top: 874px; width: 172px; height: 79px; }
.n-diff { left: 527px; top: 850px; height: 40px; }
.n-clip { left: 454px; top: 951px; height: 162px; }
.n-brush { left: 0; top: 1075px; width: 146px; height: 78px; border-radius: 0 7px 7px 0; }
.n-power { left: 851px; top: 914px; height: 212px; }

.zoom-panel {
  position: absolute;
  left: 962px;
  top: 461px;
  width: 92px;
  height: 253px;
  padding-top: 33px;
  border-radius: 12px;
  background: #222;
  box-shadow: 0 0 2px #666;
  display: flex;
  flex-direction: column;
  align-items: center;
  gap: 54px;
}

/* above the mask */
.fold {
  position: absolute;
  left: 2536px;
  top: 1571px;
  width: 91px;
  height: 91px;
  border-radius: 50%;
  background: #fff;
  display: flex;
  align-items: center;
  justify-content: center;
}
.red-arrow { position: absolute; left: 2193px; top: 176px; }
.modal {
  position: absolute;
  left: 966px;
  top: 761px;
  width: 736px;
  height: 220px;
  padding: 40px 39px 0 35px;
  border-radius: 18px;
  background: #fff;
  box-shadow: 0 10px 40px rgba(0, 0, 0, .08);
}
.modal-head { display: flex; align-items: center; height: 36px; }
.modal-title { margin-left: 17px; font-size: 28px; line-height: 36px; font-weight: 500; color: #222; }
.modal-close { margin-left: auto; margin-right: 0; }
.modal-actions { display: flex; gap: 40px; margin: 44px 0 0 55px; }
.opt {
  width: 254px;
  height: 64px;
  padding: 0;
  border: 2px solid #6f17e3;
  border-radius: 8px;
  background: #f9f5ff;
  color: #6f17e3;
  font-size: 28px;
  line-height: 36px;
}
```
